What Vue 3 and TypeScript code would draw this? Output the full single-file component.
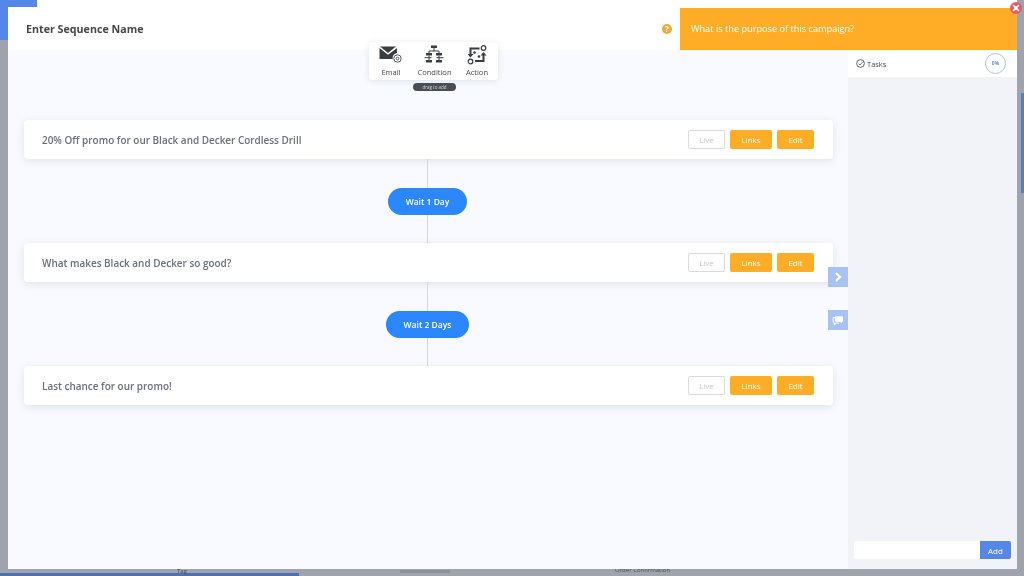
<script setup lang="ts">
interface Step { title: string; wait?: string }
const steps: Step[] = [
  { title: '20% Off promo for our Black and Decker Cordless Drill', wait: 'Wait 1 Day' },
  { title: 'What makes Black and Decker so good?', wait: 'Wait 2 Days' },
  { title: 'Last chance for our promo!' },
]
</script>

<template>
  <div class="page">
    <div class="bg-blue-bottom"></div>
    <div class="bg-blue-right"></div>
    <span class="bg-label bg-tag">Tag</span>
    <span class="bg-bar"></span>
    <span class="bg-label bg-order">Order Confirmation</span>

    <div class="modal">
      <header class="head">
        <h1 class="seq-name">Enter Sequence Name</h1>
        <span class="help">?</span>
      </header>

      <div class="purpose">What is the purpose of this campaign?</div>
      <div class="close">
        <svg width="12" height="12" viewBox="0 0 12 12"><path d="M3.6 3.6l4.8 4.8M8.4 3.6l-4.8 4.8" stroke="#fff" stroke-width="1.8" stroke-linecap="round" /></svg>
      </div>

      <div class="body">
        <main class="canvas">
          <div class="palette">
            <div class="tool">
              <svg width="24" height="20" viewBox="0 0 24 20">
                <path d="M1 1.5h16l-8 6.5z" fill="#3a3d42" />
                <path d="M0.5 3v11h13.2a5.5 5.5 0 0 1 4.3-6V3L9 9.8z" fill="#3a3d42" />
                <circle cx="18.5" cy="13.5" r="3.7" fill="none" stroke="#55585e" stroke-width="1" />
                <circle cx="18.5" cy="13.5" r="1.4" fill="none" stroke="#55585e" stroke-width="0.9" />
              </svg>
              <span>Email</span>
            </div>
            <div class="tool">
              <svg width="22" height="20" viewBox="0 0 22 20">
                <path d="M8 0.5h6v2.6H8z M3 8h6v2.6H3z M13 8h6v2.6h-6z M3 15h6v2.6H3z M13 15h6v2.6h-6z" fill="#3a3d42" />
                <path d="M11 3v3M6 8V6h10v2M6 10.5V15M16 10.5V15" fill="none" stroke="#3a3d42" stroke-width="1" />
                <path d="M1.5 12.7h7M13.5 12.7h7" stroke="#3a3d42" stroke-width="1" />
              </svg>
              <span>Condition</span>
            </div>
            <div class="tool">
              <svg width="20" height="20" viewBox="0 0 20 20">
                <circle cx="16.5" cy="3" r="2.3" fill="none" stroke="#3a3d42" stroke-width="1.2" />
                <circle cx="3.5" cy="16.5" r="2.3" fill="none" stroke="#3a3d42" stroke-width="1.2" />
                <path d="M12.5 3.5H3.5v6" fill="none" stroke="#3a3d42" stroke-width="2" />
                <path d="M8 16h8.5V9.5" fill="none" stroke="#3a3d42" stroke-width="2" />
                <path d="M0.5 9h6l-3 3.5z M13.5 10.5h6l-3-3.5z" fill="#3a3d42" />
                <circle cx="7.5" cy="7.5" r="1.3" fill="#3a3d42" />
                <circle cx="12" cy="11.5" r="1.3" fill="#3a3d42" />
              </svg>
              <span>Action</span>
            </div>
          </div>
          <div class="drag-tip">drag to add</div>

          <div class="flow">
            <template v-for="step in steps" :key="step.title">
              <div class="card">
                <span class="card-title">{{ step.title }}</span>
                <div class="actions">
                  <button class="btn live">Live</button>
                  <button class="btn orange links">Links</button>
                  <button class="btn orange edit">Edit</button>
                </div>
              </div>
              <div v-if="step.wait" class="link">
                <span class="wait">{{ step.wait }}</span>
              </div>
            </template>
          </div>

          <div class="tab tab-arrow">
            <svg width="10" height="12" viewBox="0 0 10 12"><path d="M3 2l4 4-4 4" fill="none" stroke="#fff" stroke-width="2.2" /></svg>
          </div>
          <div class="tab tab-chat">
            <svg width="12" height="11" viewBox="0 0 14 13">
              <path d="M3.6 3H2.6a1.4 1.4 0 0 0-1.4 1.4v3.6c0 .8.6 1.4 1.4 1.4v2l2.3-2h3.4" fill="none" stroke="#fff" stroke-width="1.2" />
              <path d="M4.6 1.5h7a1.4 1.4 0 0 1 1.4 1.4v3.7A1.4 1.4 0 0 1 11.6 8v1.7L9.5 8H4.6a1.4 1.4 0 0 1-1.4-1.4V2.9a1.4 1.4 0 0 1 1.4-1.4z" fill="#fff" />
            </svg>
          </div>
        </main>

        <aside class="side">
          <div class="tasks">
            <span class="tasks-label">
              <svg width="9" height="9" viewBox="0 0 10 10"><circle cx="5" cy="5" r="4.3" fill="none" stroke="#444" stroke-width="0.9" /><path d="M2.9 5.1l1.5 1.5 2.8-3" fill="none" stroke="#444" stroke-width="0.9" /></svg>
              Tasks
            </span>
            <span class="progress">0%</span>
          </div>
          <div class="side-fill"></div>
          <div class="add-row">
            <input class="add-input" type="text" />
            <button class="add-btn">Add</button>
          </div>
        </aside>
      </div>
    </div>

    <div class="corner-top"></div>
    <div class="corner-left"></div>
  </div>
</template>

<style>
html, body { margin: 0; padding: 0; overflow: hidden; }
</style>

<style scoped>
.page {
  position: relative;
  width: 1024px;
  height: 576px;
  overflow: hidden;
  background: #9fa3ad;
  font-family: "Open Sans", "Noto Sans", sans-serif;
  filter: blur(0.35px);
}
.corner-top { position: absolute; left: 0; top: 0; width: 37px; height: 7px; background: #5487e8; }
.corner-left { position: absolute; left: 0; top: 7px; width: 8px; height: 33px; background: #5487e8; }
.bg-blue-bottom { position: absolute; left: 0; top: 573px; width: 299px; height: 3px; background: #4f6fb0; }
.bg-blue-right { position: absolute; left: 1021px; top: 93px; width: 3px; height: 100px; background: #5b7db8; }
.bg-label { position: absolute; font-size: 6px; line-height: 8px; color: #4a4d55; white-space: nowrap; }
.bg-tag { left: 177px; top: 567px; }
.bg-order { left: 615px; top: 566px; }
.bg-bar { position: absolute; left: 400px; top: 570px; width: 50px; height: 3px; background: #8b8f99; }

.modal {
  position: relative;
  margin-left: 8px;
  width: 1009px;
  height: 569px;
  background: #fff;
  display: flex;
  flex-direction: column;
}
.head {
  height: 50px;
  flex: none;
  display: flex;
  align-items: center;
  padding: 8px 0 0 18px;
  box-sizing: border-box;
  background: #fff;
}
.seq-name { margin: 0; font-size: 10.7px; font-weight: 700; color: #45474d; }
.help {
  position: absolute;
  left: 654px;
  top: 24px;
  width: 10px;
  height: 10px;
  border-radius: 50%;
  background: #f0a93a;
  color: #fff;
  font-size: 8px;
  font-weight: 700;
  line-height: 10px;
  text-align: center;
}
.purpose {
  position: absolute;
  left: 672px;
  top: 8px;
  width: 337px;
  height: 42px;
  box-sizing: border-box;
  padding-left: 11px;
  background: #ffad27;
  color: #fff;
  font-size: 9.2px;
  line-height: 42px;
}
.close {
  position: absolute;
  left: 1002px;
  top: 2px;
  width: 12px;
  height: 12px;
  border-radius: 50%;
  background: #ee5a66;
  display: flex;
  align-items: center;
  justify-content: center;
}
.body { flex: 1; display: flex; min-height: 0; }
.canvas { position: relative; width: 840px; flex: none; background: #f8faff; }
.palette {
  position: absolute;
  left: 361px;
  top: -8px;
  width: 129px;
  height: 38px;
  box-sizing: border-box;
  display: flex;
  align-items: flex-start;
  justify-content: space-between;
  padding: 3px 10px 0 10px;
  background: #fff;
  border-radius: 4px;
  box-shadow: 0 1px 6px rgba(60, 70, 100, 0.14);
}
.tool { display: flex; flex-direction: column; align-items: center; gap: 2px; }
.tool span { font-size: 7.5px; line-height: 10px; color: #4a4c52; }
.drag-tip {
  position: absolute;
  left: 405px;
  top: 33px;
  width: 43px;
  height: 8px;
  border-radius: 4px;
  background: #4a4d55;
  color: #d5d7dc;
  font-size: 4.5px;
  line-height: 8px;
  text-align: center;
}
.flow { display: flex; flex-direction: column; padding: 70px 15px 0 16px; }
.card {
  height: 39px;
  flex: none;
  box-sizing: border-box;
  display: flex;
  align-items: center;
  justify-content: space-between;
  padding: 0 19px 0 18px;
  background: #fff;
  border-radius: 4px;
  box-shadow: 0 2px 8px rgba(60, 70, 100, 0.13);
}
.card-title { font-size: 9.95px; font-weight: 600; color: #6a6f7a; }
.actions { display: flex; gap: 5px; }
.btn {
  height: 19px;
  padding: 0;
  border-radius: 2px;
  font-family: inherit;
  font-size: 8px;
  line-height: 1;
  cursor: pointer;
}
.live { width: 37px; background: #fff; border: 1px solid #d8dae0; color: #c4c7cd; }
.orange { background: #ffad27; border: none; color: #fff; }
.links { width: 42px; }
.edit { width: 37px; }
.link {
  height: 84px;
  flex: none;
  display: flex;
  align-items: center;
  justify-content: center;
  padding-right: 2px;
  box-sizing: border-box;
  background: linear-gradient(#d5d8de, #d5d8de) 403px 0 / 1px 100% no-repeat;
}
.wait {
  height: 27px;
  padding: 0 18px;
  border-radius: 14px;
  background: #2b87fb;
  color: #fff;
  font-size: 8.5px;
  font-weight: 600;
  line-height: 27px;
}
.tab {
  position: absolute;
  left: 820px;
  width: 20px;
  height: 20px;
  background: #a9c2f4;
  display: flex;
  align-items: center;
  justify-content: center;
}
.tab-arrow { top: 217px; }
.tab-chat { top: 260px; }
.side {
  width: 169px;
  flex: none;
  min-width: 0;
  display: flex;
  flex-direction: column;
  background: #f1f3f9;
}
.tasks {
  height: 27px;
  flex: none;
  box-sizing: border-box;
  display: flex;
  align-items: center;
  justify-content: space-between;
  padding: 0 11px 0 8px;
  background: #fff;
}
.tasks-label { display: flex; align-items: center; gap: 2px; font-size: 7.5px; color: #4a4c52; }
.progress {
  width: 21px;
  height: 21px;
  border-radius: 50%;
  border: 1.5px solid #a9c2e8;
  box-sizing: border-box;
  color: #6f8fc4;
  font-size: 5px;
  font-weight: 700;
  line-height: 18px;
  text-align: center;
}
.side-fill { flex: 1; }
.add-row { display: flex; padding: 0 6px 10px 6px; }
.add-input {
  flex: 1;
  width: 0;
  min-width: 0;
  box-sizing: border-box;
  height: 18px;
  margin: 0;
  border: none;
  padding: 0;
  border-radius: 2px 0 0 2px;
  background: #fff;
}
.add-btn {
  width: 31px;
  height: 18px;
  padding: 0;
  border: none;
  border-radius: 0 2px 2px 0;
  background: #5487e8;
  color: #fff;
  font-family: inherit;
  font-size: 8px;
}
</style>
